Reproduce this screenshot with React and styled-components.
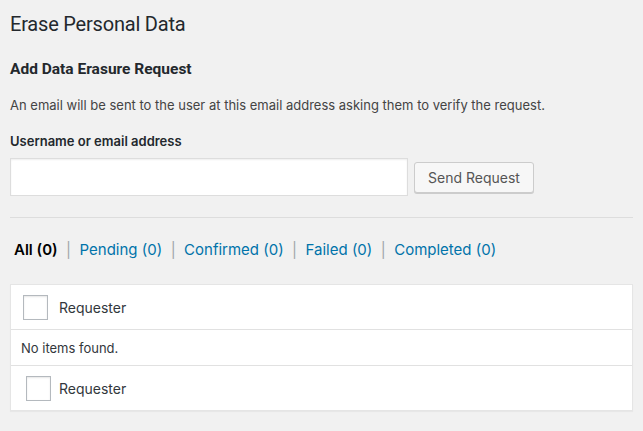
import React from "react"
import styled, { createGlobalStyle } from "styled-components"

const GlobalStyle = createGlobalStyle`
  html, body {
    margin: 0;
    background: #f1f1f1;
  }
  body {
    font-family: Inter, "Noto Sans", sans-serif;
    color: #23282d;
  }
  * { box-sizing: border-box; }
`

const Page = styled.div`
  padding: 10px 10px 20px 10px;
`

const Title = styled.h1`
  margin: 0;
  font-family: Roboto, Inter, sans-serif;
  font-size: 20px;
  line-height: 28px;
  font-weight: 400;
  letter-spacing: -0.2px;
  color: #23282d;
`

const SubTitle = styled.h2`
  margin: 20px 0 0;
  font-family: Roboto, Inter, sans-serif;
  font-size: 15.5px;
  line-height: 22px;
  font-weight: 700;
  color: #23282d;
`

const Description = styled.p`
  margin: 16px 0 0;
  font-size: 13px;
  line-height: 18px;
  color: #444;
`

const Label = styled.label`
  display: block;
  margin-top: 18px;
  font-size: 13px;
  line-height: 18px;
  font-weight: 600;
  color: #23282d;
`

const FormRow = styled.div`
  display: flex;
  align-items: center;
  gap: 6px;
  margin-top: 8px;
`

const TextInput = styled.input`
  width: 398px;
  height: 38px;
  margin: 0;
  padding: 0 8px;
  border: 1px solid #ddd;
  background: #fff;
  box-shadow: inset 0 1px 2px rgba(0, 0, 0, 0.07);
  outline: none;
  font-size: 14px;
`

const Button = styled.button`
  height: 31px;
  padding: 0 13px;
  border: 1px solid #ccc;
  border-radius: 3px;
  background: #f7f7f7;
  box-shadow: 0 1px 0 #ccc;
  color: #555;
  font-family: inherit;
  font-size: 14px;
  cursor: pointer;
`

const Divider = styled.hr`
  margin: 21px 0 0;
  border: none;
  border-top: 1px solid #ddd;
`

const Filters = styled.ul`
  display: flex;
  align-items: center;
  margin: 21px 0 0;
  padding: 0 0 0 4px;
  list-style: none;
  font-size: 15px;
  line-height: 22px;
`

const FilterItem = styled.li`
  color: #a0a5aa;
  white-space: pre;
`

const FilterLink = styled.a`
  color: ${p => (p.$current ? "#000" : "#0073aa")};
  font-weight: ${p => (p.$current ? 600 : 400)};
  text-decoration: none;
`

const Table = styled.div`
  margin-top: 23px;
  background: #fff;
  border: 1px solid #e5e5e5;
  box-shadow: 0 1px 1px rgba(0, 0, 0, 0.04);
`

const HeadRow = styled.div`
  display: flex;
  align-items: center;
  height: ${p => p.$height}px;
  padding-left: ${p => p.$indent}px;
  border-top: ${p => (p.$bordered ? "1px solid #e1e1e1" : "none")};
  font-size: 14px;
  color: #32373c;
`

const Checkbox = styled.span`
  display: inline-block;
  width: 25px;
  height: 25px;
  border: 1px solid #b4b9be;
  background: #fff;
  box-shadow: inset 0 1px 2px rgba(0, 0, 0, 0.1);
  margin-right: ${p => p.$gap}px;
`

const EmptyRow = styled.div`
  display: flex;
  align-items: center;
  height: 36px;
  padding-left: 10px;
  border-top: 1px solid #e1e1e1;
  font-size: 13px;
  color: #32373c;
`

const filters = [
  { label: "All", count: 0, current: true },
  { label: "Pending", count: 0 },
  { label: "Confirmed", count: 0 },
  { label: "Failed", count: 0 },
  { label: "Completed", count: 0 },
]

const App = () => {
  return (
    <>
      <GlobalStyle />
      <Page>
        <Title>Erase Personal Data</Title>
        <SubTitle>Add Data Erasure Request</SubTitle>
        <Description>
          An email will be sent to the user at this email address asking them to verify the request.
        </Description>
        <Label htmlFor="username_or_email">Username or email address</Label>
        <FormRow>
          <TextInput id="username_or_email" type="text" />
          <Button>Send Request</Button>
        </FormRow>
        <Divider />
        <Filters>
          {filters.map((f, i) => (
            <FilterItem key={f.label}>
              <FilterLink href="#" $current={f.current}>
                {f.label} ({f.count})
              </FilterLink>
              {i < filters.length - 1 ? "  |  " : ""}
            </FilterItem>
          ))}
        </Filters>
        <Table>
          <HeadRow $height={44} $indent={12}>
            <Checkbox $gap={11} />
            Requester
          </HeadRow>
          <EmptyRow>No items found.</EmptyRow>
          <HeadRow $height={45} $indent={15} $bordered>
            <Checkbox $gap={8} />
            Requester
          </HeadRow>
        </Table>
      </Page>
    </>
  )
}

export default App
